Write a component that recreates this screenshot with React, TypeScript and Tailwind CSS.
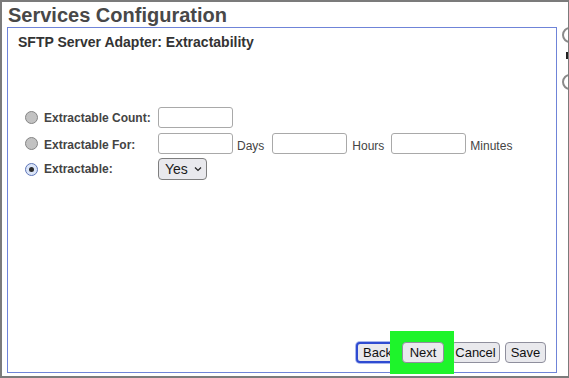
import React from "react";

function Radio({ checked }: { checked?: boolean }) {
  if (checked) {
    return (
      <div className="w-[13px] h-[13px] rounded-full border border-[#5f76b8] bg-[#dbe5f8] flex items-center justify-center shrink-0">
        <div className="w-[5px] h-[5px] rounded-full bg-[#2b2b2b]" />
      </div>
    );
  }
  return <div className="w-[13px] h-[13px] rounded-full border border-[#858585] bg-[#c2c2c2] shrink-0" />;
}

function Input() {
  return <div className="w-[75px] h-[21px] border border-[#a9a9a9] rounded-[3px] bg-white shrink-0" />;
}

export default function App() {
  return (
    <div className="relative w-[569px] h-[378px] overflow-hidden bg-white font-['Liberation_Sans',Arial,sans-serif]">
      <div className="w-[569px] h-[378px] border-l-2 border-t-2 border-b-2 border-r border-[#7b7b7b] flex flex-col">
        <h1 className="pl-[6px] pt-[1px] text-[20px] leading-[24px] font-bold text-[#484848]">
          Services Configuration
        </h1>
        <div className="ml-[5px] w-[550px] h-[346px] border border-[#6f84d8] flex flex-col">
          <h2 className="pl-[10px] pt-[6px] text-[14px] leading-[16px] font-bold text-[#333333]">
            SFTP Server Adapter: Extractability
          </h2>

          <div className="mt-[57px] flex flex-col text-[12px] text-[#444444]">
            <div className="h-[21px] flex items-center">
              <div className="ml-[17px]">
                <Radio />
              </div>
              <div className="ml-[6px] w-[114px] font-bold">Extractable Count:</div>
              <Input />
            </div>
            <div className="mt-[5px] h-[21px] flex items-center">
              <div className="ml-[17px]">
                <Radio />
              </div>
              <div className="ml-[6px] w-[114px] font-bold pt-[2px]">Extractable For:</div>
              <Input />
              <span className="ml-[4px] pt-[5px]">Days</span>
              <div className="ml-[8px]">
                <Input />
              </div>
              <span className="ml-[5px] pt-[5px]">Hours</span>
              <div className="ml-[7px]">
                <Input />
              </div>
              <span className="ml-[4px] pt-[5px]">Minutes</span>
            </div>
            <div className="mt-[4px] h-[22px] flex items-center">
              <div className="ml-[17px]">
                <Radio checked />
              </div>
              <div className="ml-[6px] w-[114px] font-bold">Extractable:</div>
              <div className="w-[49px] h-[22px] border border-[#7e7e7e] rounded-[4px] bg-[#e9e9ed] flex items-center pl-[6px] text-[14px] text-[#1a1a1a]">
                <span>Yes</span>
                <svg className="ml-[6px]" width="8" height="6" viewBox="0 0 8 6">
                  <path d="M1 1.5 L4 4.5 L7 1.5" fill="none" stroke="#222" strokeWidth="1.2" />
                </svg>
              </div>
            </div>
          </div>

          <div className="flex-1" />

          <div className="flex justify-end pr-[10px] pb-[9px] text-[13px] text-[#111111]">
            <button className="w-[43px] h-[21px] rounded-[4px] border-2 border-[#2f4bd1] bg-[#e9e9ed] shadow-[0_0_0_1px_#a9b7ee] flex items-center justify-center">
              Back
            </button>
            <button className="relative z-10 ml-[3px] w-[42px] h-[21px] rounded-[4px] border border-[#8f8f9d] bg-[#e9e9ed] flex items-center justify-center">
              Next
            </button>
            <button className="ml-[7px] w-[49px] h-[21px] rounded-[4px] border border-[#8f8f9d] bg-[#e9e9ed] flex items-center justify-center">
              Cancel
            </button>
            <button className="ml-[5px] w-[41px] h-[21px] rounded-[4px] border border-[#8f8f9d] bg-[#e9e9ed] flex items-center justify-center">
              Save
            </button>
          </div>
        </div>
      </div>

      <div className="absolute left-[561px] top-[27px] w-[7px] h-[70px] overflow-hidden">
        <div className="ml-[1px] w-[16px] h-[16px] rounded-full border-2 border-[#8a8a8a]" />
        <div className="ml-[5px] mt-[9px] w-[2px] h-[7px] bg-[#222222]" />
        <div className="ml-[1px] mt-[15px] w-[16px] h-[16px] rounded-full border-2 border-[#8a8a8a]" />
      </div>

      <div className="absolute z-[5] left-[390px] top-[331px] w-[64px] h-[43px] bg-[#1ef42b]" />
    </div>
  );
}
